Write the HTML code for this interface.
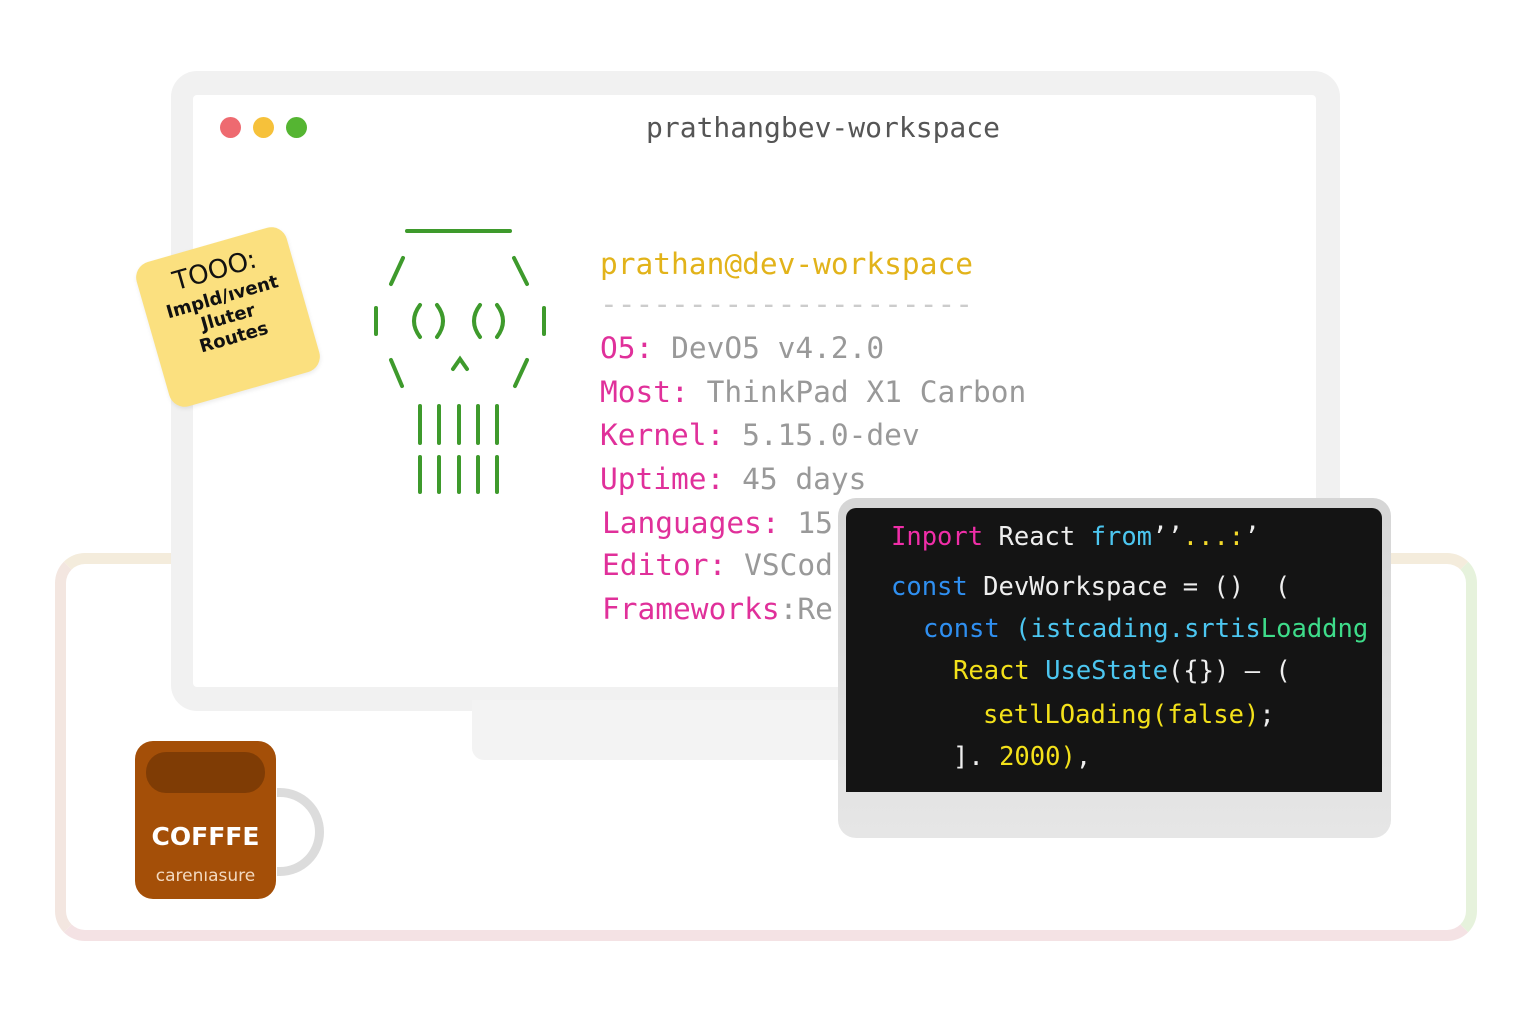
<!DOCTYPE html>
<html><head><meta charset="utf-8"><style>
*{margin:0;padding:0;box-sizing:border-box}
body{width:1536px;height:1024px;background:#fff;position:relative;overflow:hidden;font-family:"DejaVu Sans Mono","Liberation Mono",monospace}
.abs{position:absolute}
.frame{left:55px;top:553px;width:1422px;height:388px;border-radius:30px;border:11px solid #eee;
 border-color:#f4ecdc #e6f2dc #f4e2e4 #f3e6e0}
.win{left:171px;top:71px;width:1169px;height:640px;border-radius:26px;background:#f1f1f1}
.winin{left:193px;top:95px;width:1123px;height:592px;background:#fff;border-radius:4px}
.stand{left:472px;top:700px;width:870px;height:60px;background:#f3f3f3;border-radius:0 0 8px 12px}
.dot{width:21px;height:21px;border-radius:50%;top:117px}
.t{white-space:pre;font-size:29.5px;line-height:1}
.lab{color:#e0309a}
.val{color:#999}
.code{font-family:"DejaVu Sans Mono",monospace;font-size:25.5px;white-space:pre}
</style></head><body>
<div class="abs frame"></div>
<div class="abs win"></div>
<div class="abs stand"></div>
<div class="abs winin"></div>
<div class="abs dot" style="left:220px;background:#ee6a70"></div>
<div class="abs dot" style="left:253px;background:#f6c13a"></div>
<div class="abs dot" style="left:286px;background:#55b532"></div>
<div class="abs t" style="left:646px;top:114px;font-size:28px;color:#555">prathangbev-workspace</div>

<svg class="abs" style="left:360px;top:220px" width="200" height="290" stroke="#3e9a2c" stroke-width="4" fill="none" stroke-linecap="round">
<line x1="47" y1="11" x2="150" y2="11"/>
<line x1="43" y1="38" x2="31" y2="64"/><line x1="154" y1="38" x2="167" y2="64"/>
<line x1="16" y1="88" x2="16" y2="114"/><line x1="184" y1="88" x2="184" y2="114"/>
<path d="M60 85 Q48 101 60 117"/><path d="M77 85 Q89 101 77 117"/>
<path d="M120 85 Q108 101 120 117"/><path d="M137 85 Q149 101 137 117"/>
<line x1="31" y1="140" x2="42" y2="166"/><line x1="167" y1="140" x2="155" y2="166"/>
<path d="M93 149 L100 139 L107 149"/>
<line x1="60" y1="186" x2="60" y2="223"/><line x1="79" y1="186" x2="79" y2="223"/><line x1="99" y1="186" x2="99" y2="223"/><line x1="118" y1="186" x2="118" y2="223"/><line x1="137" y1="186" x2="137" y2="223"/>
<line x1="60" y1="237" x2="60" y2="272"/><line x1="79" y1="237" x2="79" y2="272"/><line x1="99" y1="237" x2="99" y2="272"/><line x1="118" y1="237" x2="118" y2="272"/><line x1="137" y1="237" x2="137" y2="272"/>
</svg>

<div class="abs t" style="left:600px;top:250px;color:#e2b31a">prathan@dev-workspace</div>
<div class="abs t" style="left:600px;top:290px;color:#ccc">---------------------</div>
<div class="abs t" style="left:600px;top:334px"><span class="lab">O5:</span> <span class="val">DevO5 v4.2.0</span></div>
<div class="abs t" style="left:600px;top:378px"><span class="lab">Most:</span> <span class="val">ThinkPad X1 Carbon</span></div>
<div class="abs t" style="left:600px;top:421px"><span class="lab">Kernel:</span> <span class="val">5.15.0-dev</span></div>
<div class="abs t" style="left:600px;top:465px"><span class="lab">Uptime:</span> <span class="val">45 days</span></div>
<div class="abs t" style="left:602px;top:509px"><span class="lab">Languages:</span> <span class="val">15</span></div>
<div class="abs t" style="left:602px;top:551px"><span class="lab">Editor:</span> <span class="val">VSCod</span></div>
<div class="abs t" style="left:602px;top:595px"><span class="lab">Frameworks</span><span class="val">:Re</span></div>

<div class="abs" style="left:838px;top:498px;width:553px;height:340px;border-radius:18px;background:linear-gradient(#d6d6d6,#e6e6e6)"></div>
<div class="abs" style="left:846px;top:508px;width:536px;height:284px;border-radius:10px 10px 0 0;background:#141414;overflow:hidden">
<div class="abs code" style="left:45px;top:14px"><span style="color:#f02ea8">Inport</span> <span style="color:#eee">React</span> <span style="color:#4cc6f0">from</span><span style="color:#eee">’’</span><span style="color:#f3d92a">...:</span><span style="color:#eee">’</span></div>
<div class="abs code" style="left:45px;top:64px"><span style="color:#2f8ff0">const</span> <span style="color:#eee">DevWorkspace = ()  (</span></div>
<div class="abs code" style="left:77px;top:106px"><span style="color:#2f8ff0">const</span> <span style="color:#4cc6f0">(istcading.srtis</span><span style="color:#3edc8a">Loaddng</span></div>
<div class="abs code" style="left:107px;top:148px"><span style="color:#f3e11a">React</span> <span style="color:#4cc6f0">UseState</span><span style="color:#eee">({}) – (</span></div>
<div class="abs code" style="left:137px;top:192px;color:#f3e11a">setlLOading(false)<span style="color:#eee">;</span></div>
<div class="abs code" style="left:107px;top:234px"><span style="color:#eee">]. </span><span style="color:#f3e11a">2000)</span><span style="color:#eee">,</span></div>
</div>

<div class="abs" style="left:150px;top:242px;width:156px;height:150px;background:#fbe07f;border-radius:16px;transform:rotate(-16deg);box-shadow:0 2px 4px rgba(0,0,0,.08);font-family:'DejaVu Sans',sans-serif;font-weight:bold;text-align:center;color:#111;padding-top:12px">
<div style="font-size:26px;font-weight:normal">TOOO:</div>
<div style="font-size:18px;margin-top:2px">Impld/ıvent</div>
<div style="font-size:18px">Jluter</div>
<div style="font-size:18px">Routes</div>
</div>

<div class="abs" style="left:277px;top:788px;width:47px;height:88px;border:9px solid #dcdcdc;border-left:none;border-radius:0 44px 44px 0"></div>
<div class="abs" style="left:135px;top:741px;width:141px;height:158px;border-radius:18px;background:#a44f08"></div>
<div class="abs" style="left:146px;top:752px;width:119px;height:41px;border-radius:20px;background:#7f3c05"></div>
<div class="abs" style="left:135px;top:822px;width:141px;text-align:center;color:#fff;font-family:'DejaVu Sans',sans-serif;font-weight:bold;font-size:25px">COFFFE</div>
<div class="abs" style="left:135px;top:866px;width:141px;text-align:center;color:#f2d9c0;font-family:'DejaVu Sans',sans-serif;font-size:17px">carenıasure</div>
</body></html>
